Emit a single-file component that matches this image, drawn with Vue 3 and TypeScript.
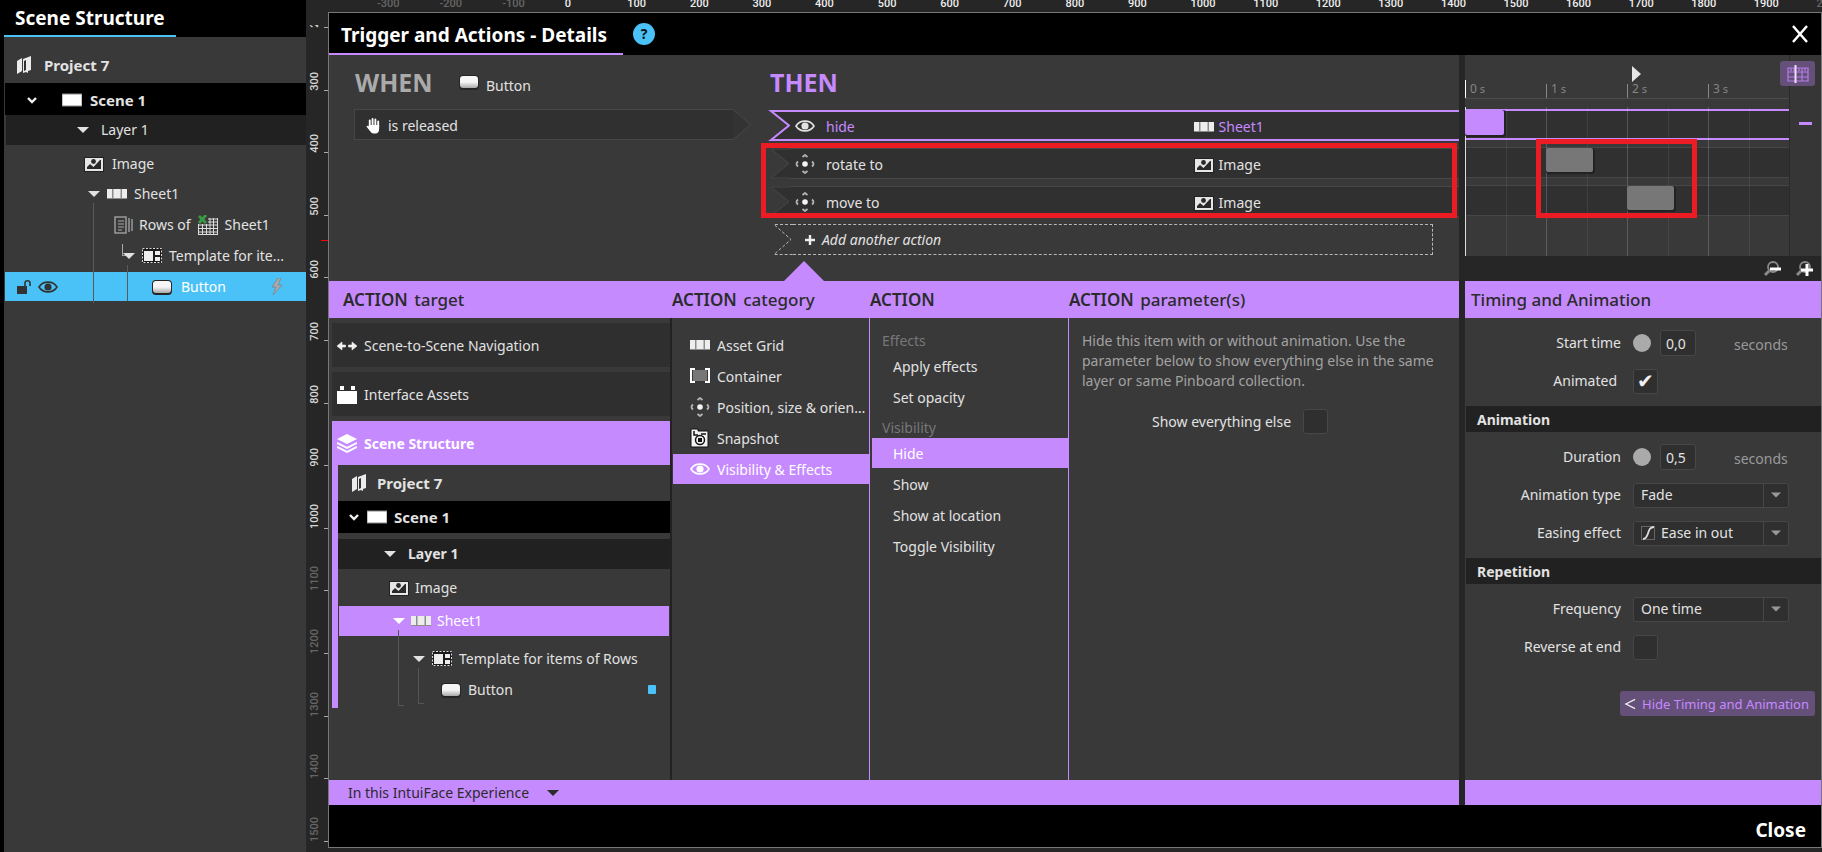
<script setup lang="ts">
import { ref } from 'vue'

interface RulerMark { label: string; dim: boolean }
interface ActionRow { verb: string; icon: string; target: string; targetIcon: string; active: boolean }
interface Clip { start: number; length: number; active: boolean }

const columns: RulerMark[] = Array.from({ length: 24 }, (_, i) => {
  const value = (i - 3) * 100
  return { label: String(value), dim: value < 0 || value > 1900 }
})
const rows: RulerMark[] = Array.from({ length: 13 }, (_, i) => {
  const value = (i + 3) * 100
  return { label: String(value), dim: value > 1000 }
})

const actions: ActionRow[] = [
  { verb: 'hide', icon: 'eye', target: 'Sheet1', targetIcon: 'grid', active: true },
  { verb: 'rotate to', icon: 'move', target: 'Image', targetIcon: 'image', active: false },
  { verb: 'move to', icon: 'move', target: 'Image', targetIcon: 'image', active: false },
]

const clips: Clip[] = [
  { start: 0, length: 0.48, active: true },
  { start: 1, length: 0.58, active: false },
  { start: 2, length: 0.58, active: false },
]
const spanSeconds = 4
const percent = (seconds: number): string => `${(seconds / spanSeconds) * 100}%`

const categories = [
  { label: 'Asset Grid', icon: 'grid' },
  { label: 'Container', icon: 'container' },
  { label: 'Position, size & orientation', icon: 'move' },
  { label: 'Snapshot', icon: 'snapshot' },
  { label: 'Visibility & Effects', icon: 'eye' },
]
const category = ref('Visibility & Effects')

const effectActions = ['Apply effects', 'Set opacity']
const visibilityActions = ['Hide', 'Show', 'Show at location', 'Toggle Visibility']
const action = ref('Hide')

const showElse = ref(false)
const startTime = ref('0,0')
const animated = ref(true)
const duration = ref('0,5')
const animationType = ref('Fade')
const easing = ref('Ease in out')
const frequency = ref('One time')
const reverse = ref(false)
</script>

<template>
  <svg class="defs" aria-hidden="true">
    <defs>
      <linearGradient id="btnFill" x1="0" y1="0" x2="0" y2="1">
        <stop offset="0.5" stop-color="#f6f6f6" />
        <stop offset="1" stop-color="#a8a8a8" />
      </linearGradient>
    </defs>
    <symbol id="project" viewBox="0 0 14 19">
      <path d="M0 5 5 2V15L0 18Z M6 3 14 0V14L11 15V17L9 16 6 17Z" fill="#ececec" />
      <path d="M7 5 9 4V14L7 15Z" fill="#333" />
    </symbol>
    <symbol id="scene" viewBox="0 0 20 20"><rect y="4" width="20" height="12" fill="#fff" stroke="#888" stroke-width="1" /></symbol>
    <symbol id="chevron" viewBox="0 0 12 12"><path d="M2 4 6 8 10 4" fill="none" stroke="#f0f0f0" stroke-width="2.4" /></symbol>
    <symbol id="tri" viewBox="0 0 12 12"><path d="M0 3H12L6 9Z" fill="currentColor" /></symbol>
    <symbol id="image" viewBox="0 0 20 20">
      <rect x="0" y="3" width="20" height="15" fill="#222" />
      <rect x="1" y="4" width="18" height="13" fill="#e6e6e6" />
      <path d="M3 15V13L6 10 9.500 13 16 6H17V15Z" fill="#2a2a2a" />
      <circle cx="9.500" cy="7.500" r="2.400" fill="#2a2a2a" />
    </symbol>
    <symbol id="grid" viewBox="0 0 20 20">
      <path d="M0 5H20V15H0Z" fill="#8c8c8c" />
      <path d="M0 5H5V14H0Z M6.500 5H13.500V14H6.500Z M15 5H20V14H15Z" fill="#ededed" />
    </symbol>
    <symbol id="list" viewBox="0 0 20 20">
      <path d="M1 2H12V18H1Z M15 3V17 M18 4V16" fill="none" stroke="#999" stroke-width="1.500" />
      <path d="M4 6H10 M4 9H10 M4 12H10 M4 15H8" stroke="#aaa" stroke-width="1.200" />
    </symbol>
    <symbol id="sheet" viewBox="0 0 20 20">
      <path d="M0 10H20 M0 13.500H20 M0 17H20 M10 4H20 M10 7H20 M.5 9V19 M4.500 9V19 M8.500 9V19 M12 3V19 M15.500 3V19 M19.500 3V19 M0 19.500H20" stroke="#ddd" stroke-width="1" />
      <path d="M1 1 8 8 M8 0 1 8" stroke="#3c9a45" stroke-width="2.800" />
    </symbol>
    <symbol id="template" viewBox="0 0 20 20">
      <rect y="2" width="20" height="15" fill="#1c1c1c" />
      <rect x=".5" y="2.500" width="19" height="14" fill="none" stroke="#ddd" stroke-dasharray="2 1.500" />
      <path d="M2 5H11V15H2Z M13 5H18V9H13Z M13 11H18V15H13Z" fill="#ededed" />
    </symbol>
    <symbol id="button" viewBox="0 0 20 20">
      <rect x="0" y="3" width="20" height="15" rx="4" fill="#252525" />
      <rect x="1" y="4" width="18" height="12" rx="3" fill="url(#btnFill)" />
    </symbol>
    <symbol id="eye" viewBox="0 0 20 20">
      <path d="M1 10C5 3.500 15 3.500 19 10C15 16.500 5 16.500 1 10Z" fill="none" stroke="currentColor" stroke-width="1.600" />
      <circle cx="10" cy="10" r="3.600" fill="currentColor" />
    </symbol>
    <symbol id="lock" viewBox="0 0 16 16"><path d="M1 7H11V15H1Z" fill="#333" /><path d="M9 7V4C9 1 14 1 14 4V7" fill="none" stroke="#333" stroke-width="1.600" /></symbol>
    <symbol id="bolt" viewBox="0 0 12 18"><path d="M7 0 1 9H5L2 17 11 7H7L10 0Z" fill="#aaa" stroke="#777" stroke-width=".6" /></symbol>
    <symbol id="hand" viewBox="0 0 16 18">
      <path d="M4 10V3 M7 9V1.500 M10 9V2 M13 10V4" stroke="#fff" stroke-width="2" stroke-linecap="round" />
      <path d="M3 8H14V12Q14 17 10 17H8Q6 17 4 14L.5 9.500Q1 8 3 9.500Z" fill="#fff" />
    </symbol>
    <symbol id="move" viewBox="0 0 20 20">
      <circle cx="10" cy="10" r="2.800" fill="#f4f4f4" />
      <path d="M7.500 3 10 1 12.500 3 M7.500 17 10 19 12.500 17 M3 7.500Q0 10 3 12.500 M17 7.500Q20 10 17 12.500" fill="none" stroke="#b4b4b4" stroke-width="1.800" />
    </symbol>
    <symbol id="arrows" viewBox="0 0 20 20"><path d="M0 10 5 6V9H8.500V11H5V14Z M20 10 15 6V9H11.500V11H15V14Z" fill="#f0f0f0" stroke="#f0f0f0" stroke-width=".6" /></symbol>
    <symbol id="brick" viewBox="0 0 20 20"><path d="M0 6H20V19H0Z M3 1H7V5H3Z M14 1H18V5H14Z" fill="#fff" /></symbol>
    <symbol id="layers" viewBox="0 0 20 20">
      <path d="M10 0 20 5 10 10 0 5Z" fill="#fff" />
      <path d="M0 9 10 14 20 9 M0 13 10 18 20 13" fill="none" stroke="#fff" stroke-width="2" />
    </symbol>
    <symbol id="container" viewBox="0 0 20 20">
      <rect x="3" y="4" width="14" height="11" fill="#777" />
      <path d="M5 3H1V16H5 M15 3H19V16H15" fill="none" stroke="#fff" stroke-width="2" />
    </symbol>
    <symbol id="snapshot" viewBox="0 0 20 20">
      <path d="M1 1H8V3H18V19H1Z" fill="#f2f2f2" stroke="#111" />
      <path d="M4 3V7H8 M11 6H16" fill="none" stroke="#111" stroke-width="1.500" />
      <circle cx="10" cy="12" r="4.500" fill="none" stroke="#111" stroke-width="1.500" />
      <rect x="8" y="10" width="4" height="4" fill="#111" />
    </symbol>
    <symbol id="magnifier" viewBox="0 0 16 16">
      <circle cx="9" cy="6" r="5" fill="none" stroke="#8a8a8a" stroke-width="1.800" />
      <path d="M5 10 1 14" stroke="#8a8a8a" stroke-width="3" />
    </symbol>
  </svg>

  <div class="app">
    <aside class="scene-panel">
      <header class="scene-head"><h2>Scene Structure</h2></header>
      <div class="tree">
        <div class="node project"><svg class="i-project"><use href="#project" /></svg>Project 7</div>
        <div class="node scene"><svg class="i12"><use href="#chevron" /></svg><svg class="i20"><use href="#scene" /></svg>Scene 1</div>
        <div class="node layer"><svg class="i12"><use href="#tri" /></svg>Layer 1</div>
        <div class="node image"><svg class="i20"><use href="#image" /></svg>Image</div>
        <div class="node sheet"><svg class="i12"><use href="#tri" /></svg><svg class="i20"><use href="#grid" /></svg>Sheet1</div>
        <div class="node rows"><svg class="i20"><use href="#list" /></svg>Rows of<svg class="i20 excel"><use href="#sheet" /></svg>Sheet1</div>
        <div class="node template"><span class="elbow" /><svg class="i12"><use href="#tri" /></svg><svg class="i20"><use href="#template" /></svg>Template for ite...</div>
        <div class="node selected">
          <svg class="i16"><use href="#lock" /></svg><svg class="i20 eye"><use href="#eye" /></svg>
          <svg class="i20 btn"><use href="#button" /></svg><span class="grow">Button</span><svg class="bolt"><use href="#bolt" /></svg>
        </div>
        <span class="guide outer" /><span class="guide inner" />
      </div>
    </aside>

    <div class="v-ruler">
      <div class="v-mark first"><span>200</span></div>
      <div v-for="m in rows" :key="m.label" class="v-mark" :class="{ dim: m.dim }"><span>{{ m.label }}</span></div>
      <i class="cursor" />
    </div>

    <main class="stage">
      <div class="h-ruler"><div class="h-marks"><span v-for="m in columns" :key="m.label" :class="{ dim: m.dim }">{{ m.label }}</span></div></div>

      <section class="dialog">
        <header class="dialog-head">
          <h1>Trigger and Actions - Details</h1>
          <button class="help" aria-label="Help">?</button>
          <button class="close-x" aria-label="Close dialog"><svg viewBox="0 0 18 18"><path d="M2 1 16 17 M16 1 2 17" stroke="#fff" stroke-width="2.500" /></svg></button>
        </header>

        <div class="body">
          <div class="main">
            <div class="summary">
              <div class="when">
                <div class="when-head"><h2>WHEN</h2><svg class="i20"><use href="#button" /></svg><span>Button</span></div>
                <button class="trigger">
                  <span class="trigger-body"><svg class="i-hand"><use href="#hand" /></svg>is released</span>
                  <svg class="tip" viewBox="0 0 18 31"><path d="M0 .5 17.500 15.500 0 30.500" fill="#333" stroke="#474747" /></svg>
                </button>
              </div>
              <div class="then">
                <h2>THEN</h2>
                <div class="actions">
                  <button v-for="a in actions" :key="a.verb" class="act" :class="{ active: a.active }">
                    <svg class="notch" viewBox="0 0 20 31"><path class="nf" d="M0 0H20V31H0L19 15.500Z" /><path class="ns" d="M20 1H1L19 15.500 1 30H20" /></svg>
                    <span class="act-body">
                      <svg class="i20"><use :href="'#' + a.icon" /></svg><span class="verb">{{ a.verb }}</span>
                      <span class="target"><svg class="i20"><use :href="'#' + a.targetIcon" /></svg>{{ a.target }}</span>
                    </span>
                  </button>
                  <button class="add">
                    <svg class="notch" viewBox="0 0 20 31"><path d="M20 .5H1L18 15.500 1 30.500H20" fill="none" stroke="#b8b8b8" stroke-dasharray="3 2" /></svg>
                    <span class="add-body"><svg class="plus" viewBox="0 0 10 10"><path d="M5 0V10 M0 5H10" stroke="#eee" stroke-width="2.400" /></svg>Add another action</span>
                  </button>
                  <i class="highlight" />
                </div>
                <i class="pointer" />
              </div>
            </div>

            <div class="cols titles">
              <h3><b>ACTION</b> target</h3>
              <h3><b>ACTION</b> category</h3>
              <h3><b>ACTION</b></h3>
              <h3><b>ACTION</b> parameter(s)</h3>
            </div>

            <div class="cols content">
              <div class="targets">
                <button class="group"><svg class="i20"><use href="#arrows" /></svg>Scene-to-Scene Navigation</button>
                <button class="group"><svg class="i20"><use href="#brick" /></svg>Interface Assets</button>
                <button class="group on"><svg class="i20"><use href="#layers" /></svg>Scene Structure</button>
                <div class="subtree">
                  <div class="node project"><svg class="i-project"><use href="#project" /></svg>Project 7</div>
                  <div class="node scene"><svg class="i12"><use href="#chevron" /></svg><svg class="i20"><use href="#scene" /></svg>Scene 1</div>
                  <div class="node layer"><svg class="i12"><use href="#tri" /></svg>Layer 1</div>
                  <div class="node image"><svg class="i20"><use href="#image" /></svg>Image</div>
                  <div class="node sheet"><svg class="i12"><use href="#tri" /></svg><svg class="i20"><use href="#grid" /></svg>Sheet1</div>
                  <div class="node template"><svg class="i12"><use href="#tri" /></svg><svg class="i20"><use href="#template" /></svg>Template for items of Rows</div>
                  <div class="node btn"><svg class="i20"><use href="#button" /></svg><span class="grow">Button</span><i class="dot" /></div>
                  <span class="guide outer" /><span class="guide inner" />
                </div>
              </div>

              <div class="categories">
                <button v-for="c in categories" :key="c.label" :class="{ on: category === c.label }" @click="category = c.label">
                  <svg class="i20"><use :href="'#' + c.icon" /></svg><span class="clip">{{ c.label }}</span>
                </button>
              </div>

              <div class="action-list">
                <p>Effects</p>
                <button v-for="a in effectActions" :key="a" :class="{ on: action === a }" @click="action = a">{{ a }}</button>
                <p class="second">Visibility</p>
                <button v-for="a in visibilityActions" :key="a" :class="{ on: action === a }" @click="action = a">{{ a }}</button>
              </div>

              <div class="params">
                <p>Hide this item with or without animation. Use the parameter below to show everything else in the same layer or same Pinboard collection.</p>
                <label class="else">Show everything else<input v-model="showElse" type="checkbox" /></label>
              </div>
            </div>

            <button class="scope">In this IntuiFace Experience<svg class="i12"><use href="#tri" /></svg></button>
          </div>

          <div class="side">
            <div class="timeline">
              <div class="track-area">
                <div class="scale">
                  <span v-for="s in spanSeconds" :key="s"><b>{{ s - 1 }}</b> s</span>
                  <svg class="play" viewBox="0 0 9 16"><path d="M0 0 9 8 0 16Z" fill="#e6e6e6" /></svg>
                </div>
                <div class="tracks">
                  <div v-for="(c, i) in clips" :key="i" class="track" :class="{ active: c.active }">
                    <i class="block" :style="{ left: percent(c.start), width: percent(c.length) }" />
                  </div>
                  <div class="lines"><i v-for="n in 8" :key="n" /></div>
                  <i class="highlight" />
                </div>
              </div>
              <div class="rail">
                <button class="tl-toggle" aria-label="Toggle timeline">
                  <svg viewBox="0 0 22 18"><path d="M1 3H21V16H1Z M1 7H21 M1 12H21 M15 3V16 M4 3V6 M7 3V6 M12 3V6 M18 3V6" fill="none" stroke="#b37ee6" stroke-width="1.200" /><path d="M8.500 0V18" stroke="#f0dcff" stroke-width="2" /></svg>
                </button>
                <i class="minus" />
              </div>
            </div>
            <div class="zoom-bar">
              <button aria-label="Zoom out"><svg viewBox="0 0 18 16"><use href="#magnifier" width="16" height="16" /><path d="M6 8H17" stroke="#fff" stroke-width="3" /></svg></button>
              <button aria-label="Zoom in"><svg viewBox="0 0 18 16"><use href="#magnifier" width="16" height="16" /><path d="M5 9H17 M11 3V15" stroke="#fff" stroke-width="3" /></svg></button>
            </div>
            <h3 class="side-title">Timing and Animation</h3>
            <div class="form">
              <div class="fields">
                <div class="field"><label for="start">Start time</label><i class="knob" /><input id="start" v-model="startTime" type="text" /><span class="unit">seconds</span></div>
                <div class="field"><label for="animated" class="near">Animated</label><input id="animated" v-model="animated" type="checkbox" /></div>
              </div>
              <h4>Animation</h4>
              <div class="fields">
                <div class="field"><label for="dur">Duration</label><i class="knob" /><input id="dur" v-model="duration" type="text" /><span class="unit">seconds</span></div>
                <div class="field"><label for="type">Animation type</label>
                  <span class="select"><select id="type" v-model="animationType"><option>Fade</option><option>Slide</option></select><svg class="arrow"><use href="#tri" /></svg></span>
                </div>
                <div class="field"><label for="ease">Easing effect</label>
                  <span class="select with-icon"><select id="ease" v-model="easing"><option>Ease in out</option><option>Linear</option></select>
                    <svg class="curve" viewBox="0 0 14 14"><rect x=".5" y=".5" width="13" height="13" fill="none" stroke="#666" /><path d="M2 13C9 13 5 1 13 1" fill="none" stroke="#ddd" stroke-width="1.800" /></svg>
                    <svg class="arrow"><use href="#tri" /></svg></span>
                </div>
              </div>
              <h4>Repetition</h4>
              <div class="fields">
                <div class="field"><label for="freq">Frequency</label>
                  <span class="select"><select id="freq" v-model="frequency"><option>One time</option><option>Loop</option></select><svg class="arrow"><use href="#tri" /></svg></span>
                </div>
                <div class="field"><label for="rev">Reverse at end</label><input id="rev" v-model="reverse" type="checkbox" /></div>
              </div>
              <button class="hide-timing"><svg viewBox="0 0 12 12"><path d="M11 1 1 6 11 11" fill="none" stroke="#eee" stroke-width="1.400" /></svg>Hide Timing and Animation</button>
            </div>
            <div class="side-foot" />
          </div>
        </div>

        <footer class="dialog-foot"><button>Close</button></footer>
      </section>
    </main>
  </div>
</template>

<style>
body { margin: 0; background: #262626; }
</style>

<style scoped>
* { box-sizing: border-box; }
.defs { position: absolute; width: 0; height: 0; }
.app { display: flex; min-height: 100vh; background: #262626; color: #e2e2e2; font: 14px/20px "Noto Sans", "Open Sans", sans-serif; overflow: hidden; }
h1, h2, h3, h4, p { margin: 0; font-weight: 400; }
button { font: inherit; color: inherit; background: none; border: 0; padding: 0; margin: 0; text-align: left; cursor: pointer; }
svg { flex: none; display: block; overflow: visible; }
i { display: block; }
.i12 { width: 12px; height: 12px; }
.i16 { width: 16px; height: 16px; }
.i20 { width: 20px; height: 20px; }
.i-project { width: 14px; height: 19px; }
.grow { flex: 1; }

.scene-panel { flex: none; width: 306px; background: #393939; border-left: 4px solid #000; }
.scene-head { height: 37px; background: #000; }
.scene-head h2 { width: 172px; height: 37px; padding-left: 11px; border-bottom: 2px solid #4bc2f7; color: #fff; font-size: 19px; line-height: 36px; font-weight: 700; white-space: nowrap; }
.tree { position: relative; padding-top: 10px; }
.node { display: flex; align-items: center; height: 31px; white-space: nowrap; }
.node.project { height: 36px; padding-left: 13px; gap: 13px; font-size: 15px; font-weight: 700; }
.node.scene { height: 32px; padding-top: 2px; background: #000; font-weight: 700; gap: 8px; font-size: 15px; }
.node.layer { height: 30px; background: #212121; gap: 12px; }
.tree .scene { margin-left: 1px; padding-left: 21px; }
.tree .scene .i20 { margin-left: 16px; }
.tree .layer { margin-left: 2px; padding-left: 71px; }
.tree .image { height: 37px; padding-left: 80px; gap: 8px; }
.tree .sheet { height: 24px; padding-left: 84px; gap: 7px; }
.tree .rows { height: 37px; padding-left: 110px; gap: 5px; }
.tree .excel { margin: 0 2px; }
.tree .template { height: 26px; padding-left: 118px; gap: 7px; }
.tree .template .i12 { margin-left: -12px; }
.elbow { width: 6px; height: 12px; margin-top: -12px; border-left: 1px solid #aaa; border-bottom: 1px solid #aaa; }
.tree .selected { height: 29px; background: #4bc2f7; color: #fff; padding: 0 23px 0 11px; margin: 3px 0 0 1px; }
.selected .eye { color: #333; margin-left: 6px; }
.selected .btn { margin: 0 9px 0 94px; }
.bolt { width: 12px; height: 18px; }
.guide { position: absolute; width: 1px; background: #5a5a5a; }
.tree .outer { left: 89px; top: 166px; bottom: -2px; }
.tree .inner { left: 123px; top: 228px; bottom: 0; }

.v-ruler { position: relative; flex: none; display: flex; flex-direction: column; width: 22px; padding: 25px 0 10px; font: 500 11px/12px Roboto, "Liberation Sans", sans-serif; }
.v-mark { position: relative; flex: 1; display: flex; align-items: flex-end; overflow: hidden; padding-left: 3px; color: #d8d8d8; }
.v-mark::after { content: ""; position: absolute; right: 0; bottom: 0; width: 4px; height: 1px; background: #aaa; }
.v-mark span { writing-mode: vertical-rl; transform: rotate(180deg); }
.v-mark.first { flex: 0 0 3px; }
.dim { color: #666; }
.v-mark.dim { color: #666; }
.cursor { position: absolute; right: 0; top: 240px; width: 7px; height: 1px; background: red; }

.stage { flex: 1; min-width: 0; display: flex; flex-direction: column; padding-bottom: 4px; }
.h-ruler { height: 12px; overflow: hidden; }
.h-marks { display: grid; grid-template-columns: repeat(24, 1fr); margin: 0 -57px 0 49px; color: #eee; font: 500 11px/8px Roboto, "Liberation Sans", sans-serif; }
.h-marks .dim { color: #666; }

.dialog { flex: 1; display: flex; flex-direction: column; border: 1px solid #777; background: #262626; min-width: 0; }
.dialog-head { display: flex; align-items: center; height: 42px; background: #000; padding-right: 12px; }
.dialog-head h1 { width: 294px; height: 42px; padding-left: 12px; border-bottom: 2px solid #c68aff; color: #fff; font-size: 19px; line-height: 45px; font-weight: 700; white-space: nowrap; }
.help { width: 22px; height: 22px; margin: 0 auto 0 10px; border-radius: 50%; background: #4bc2f7; color: #111; font-weight: 700; text-align: center; line-height: 22px; }
.close-x svg { width: 18px; height: 18px; }
.body { flex: 1; display: flex; gap: 6px; min-height: 0; }
.main { flex: 1; min-width: 0; display: flex; flex-direction: column; background: #393939; }
.side { flex: none; width: 356px; display: flex; flex-direction: column; background: #393939; }

.summary { display: grid; grid-template-columns: 441fr 689fr; height: 226px; }
.summary h2 { font-size: 25px; line-height: 34px; font-weight: 700; }
.when { padding: 10px 19px 0 25px; }
.when-head { display: flex; align-items: center; height: 44px; padding-bottom: 10px; }
.when-head h2 { width: 76px; margin: 0 28px 0 1px; color: #aaa; }
.when-head span { padding: 7px 0 0 7px; }
.trigger { display: flex; width: 100%; height: 31px; }
.trigger-body { flex: 1; display: flex; align-items: center; gap: 7px; padding: 2px 0 0 11px; background: #303030; border: 1px solid #474747; border-right: 0; }
.i-hand { width: 15px; height: 18px; }
.tip { width: 18px; height: 31px; }
.then { position: relative; padding-top: 10px; min-width: 0; }
.then h2 { color: #c68aff; height: 45px; }
.actions { position: relative; display: flex; flex-direction: column; gap: 7px; }
.act { display: flex; height: 31px; }
.notch { width: 20px; height: 31px; }
.nf { fill: #303030; }
.ns { fill: none; stroke: #474747; }
.act-body { flex: 1; display: flex; align-items: center; gap: 11px; padding-left: 5px; background: #303030; border: solid #474747; border-width: 1px 0; }
.active .ns { stroke: #c68aff; stroke-width: 2; }
.active .act-body { border-color: #c68aff; border-width: 2px 0; }
.verb { flex: 356; padding-top: 2px; }
.target { flex: 265; display: flex; align-items: center; gap: 5px; padding-top: 2px; }
.active .verb, .active .target { color: #c68aff; }
.add { display: flex; height: 31px; margin: 0 26px 0 3px; font-style: italic; }
.add-body { flex: 1; display: flex; align-items: center; gap: 7px; padding-left: 12px; border: 1px dashed #b8b8b8; border-left: 0; }
.plus { width: 10px; height: 10px; }
.highlight { position: absolute; border: 5px solid #ed1c24; pointer-events: none; }
.actions .highlight { left: -9px; right: 2px; top: 33px; height: 75px; }
.pointer { position: absolute; left: 14px; bottom: 0; border: 20px solid transparent; border-top-width: 0; border-bottom-color: #c68aff; }

.cols { display: grid; grid-template-columns: 343fr 198fr 199fr 390fr; }
.titles { height: 37px; background: #c68aff; color: #2b2b2b; }
.titles h3 { font-size: 17px; font-weight: 500; line-height: 38px; white-space: nowrap; }
.titles h3:first-child { padding-left: 14px; }
.titles b { font-weight: 600; margin-right: 2px; }
.content { flex: 1; }
.content > div { min-width: 0; }
.targets { border-right: 2px solid #222; padding: 5px 0 0 3px; }
.group { display: flex; align-items: center; gap: 7px; width: 100%; height: 44px; padding: 2px 0 0 5px; margin-bottom: 5px; background: #2f2f2f; }
.group.on { background: #c68aff; color: #fff; font-weight: 700; margin: 0; }
.subtree { position: relative; border-left: 6px solid #c68aff; padding-bottom: 3px; }
.subtree .project { padding-left: 14px; gap: 11px; }
.subtree .scene { padding: 0 0 0 10px; gap: 7px; margin-bottom: 6px; }
.subtree .layer { padding-left: 46px; font-weight: 700; }
.subtree .image { height: 37px; padding-left: 51px; gap: 6px; }
.subtree .sheet { height: 30px; margin: 0 1px 7px 1px; padding-left: 54px; gap: 6px; background: #c68aff; color: #fff; }
.subtree .template { padding-left: 75px; gap: 7px; }
.subtree .btn { padding: 0 14px 0 103px; gap: 7px; }
.dot { width: 8px; height: 9px; border-radius: 1px; background: #4bc2f7; }
.subtree .guide { border: solid #555; border-width: 0 0 1px 1px; width: 6px; background: none; }
.subtree .outer { left: 60px; top: 165px; bottom: 2px; }
.subtree .inner { left: 80px; top: 203px; bottom: 4px; }

.categories, .action-list { border-right: 1px solid #c68aff; }
.categories { padding: 12px 0 0 1px; }
.categories button { display: flex; align-items: center; gap: 7px; width: 100%; height: 30px; margin-bottom: 1px; padding: 2px 0 0 17px; }
.categories svg { margin-top: -2px; }
.clip { min-width: 0; flex: 1; overflow: hidden; white-space: nowrap; text-overflow: ellipsis; }
.on { background: #c68aff; color: #fff; }
.action-list { padding: 13px 0 0 2px; }
.action-list p { height: 20px; padding-left: 10px; color: #777; }
.action-list .second { padding-top: 5px; height: 25px; }
.action-list button { display: block; width: 100%; height: 30px; margin-bottom: 1px; padding: 1px 0 0 21px; }
.params { padding: 13px 20px 0 13px; color: #a2a2a2; }
.else { display: flex; align-items: center; gap: 12px; margin: 18px 0 0 70px; color: #e2e2e2; }
.scope { display: flex; align-items: center; gap: 18px; height: 25px; padding-left: 19px; background: #c68aff; color: #2b2b2b; }

input, select { font: inherit; color: #e2e2e2; margin: 0; background: #2f2f2f; border: 1px solid #474747; border-radius: 3px; }
input[type="checkbox"] { appearance: none; width: 25px; height: 25px; display: grid; place-items: center; }
input[type="checkbox"]:checked::before { content: "✔"; font: 20px/22px "DejaVu Sans", sans-serif; color: #f2f2f2; }
input[type="text"] { width: 36px; height: 26px; padding: 0 0 0 5px; }

.timeline { display: flex; height: 201px; }
.track-area { flex: 1; display: flex; flex-direction: column; }
.scale { position: relative; display: grid; grid-template-columns: repeat(4, 1fr); align-items: end; height: 44px; border-bottom: 1px solid #4c4c4c; color: #858585; font: 11px/16px "Noto Sans", sans-serif; }
.scale span { height: 14px; border-left: 1px solid #888; padding-left: 4px; line-height: 10px; }
.scale span:first-of-type { height: 18px; border-color: #fff; padding-top: 4px; }
.scale b { font-size: 12px; font-weight: 400; }
.play { position: absolute; left: 167px; top: 11px; width: 9px; height: 16px; }
.tracks { position: relative; flex: 1; display: flex; flex-direction: column; gap: 7px; padding-top: 10px; }
.track { position: relative; height: 31px; background: #303030; border: solid #464646; border-width: 1px 0; }
.track.active { border-color: #c68aff; border-width: 2px 0; }
.block { position: absolute; z-index: 1; top: 0; height: 24px; background: #777; border-radius: 2px; box-shadow: 1px 1px 0 1px #222; }
.active .block { top: -1px; background: #c68aff; height: 25px; }
.lines { position: absolute; inset: 8px 0 0; display: grid; grid-template-columns: repeat(8, 1fr); }
.lines i { border-left: 1px solid rgba(255, 255, 255, 0.07); }
.lines i:nth-child(odd) { border-color: rgba(255, 255, 255, 0.18); }
.lines i:first-child { border-color: #ddd; }
.tracks .highlight { z-index: 2; left: 71px; right: 92px; top: 40px; height: 79px; }
.rail { width: 32px; border-left: 1px solid #2a2a2a; background: #363636; }
.tl-toggle { position: relative; display: grid; place-items: center; width: 35px; height: 25px; margin: 6px 0 0 -10px; border-radius: 3px; background: #65507a; }
.tl-toggle svg { width: 22px; height: 18px; }
.minus { width: 13px; height: 3px; margin: 36px 0 0 9px; background: #c68aff; }
.zoom-bar { display: flex; justify-content: flex-end; align-items: center; gap: 14px; height: 25px; padding-right: 7px; background: #262626; }
.zoom-bar svg { width: 18px; height: 16px; }
.side-title { height: 37px; padding-left: 6px; background: #c68aff; color: #2b2b2b; font-size: 17px; font-weight: 500; line-height: 38px; }
.form { flex: 1; }
.fields { display: grid; gap: 12px; padding: 12px 0; }
.field { display: flex; align-items: center; height: 26px; }
.field label { width: 156px; margin-right: 12px; text-align: right; }
.field .near { width: 152px; margin-right: 16px; }
.knob { width: 18px; height: 18px; margin-right: 9px; border-radius: 50%; background: #aaa; }
.unit { margin-left: 38px; padding-top: 4px; color: #999; }
.form h4 { height: 26px; margin-left: 1px; padding-left: 11px; background: #212121; font-weight: 700; line-height: 27px; }
.select { position: relative; width: 156px; height: 25px; }
.select select { appearance: none; width: 100%; height: 25px; padding: 0 26px 0 7px; }
.with-icon select { padding-left: 27px; }
.select::after { content: ""; position: absolute; right: 25px; top: 1px; bottom: 1px; width: 1px; background: #474747; }
.arrow { position: absolute; right: 8px; top: 7px; width: 10px; height: 10px; color: #999; pointer-events: none; }
.curve { position: absolute; left: 8px; top: 5px; width: 14px; height: 14px; }
.hide-timing { display: flex; align-items: center; gap: 6px; height: 25px; width: 195px; margin: 19px 6px 0 auto; padding-left: 5px; border-radius: 3px; background: #65507a; color: #c68aff; font-size: 13px; white-space: nowrap; }
.hide-timing svg { width: 11px; height: 12px; }
.side-foot { height: 25px; background: #c68aff; }
.dialog-foot { display: flex; justify-content: flex-end; align-items: center; height: 42px; padding: 8px 15px 0 0; background: #000; color: #fff; font-size: 19px; line-height: 26px; font-weight: 700; }
</style>
